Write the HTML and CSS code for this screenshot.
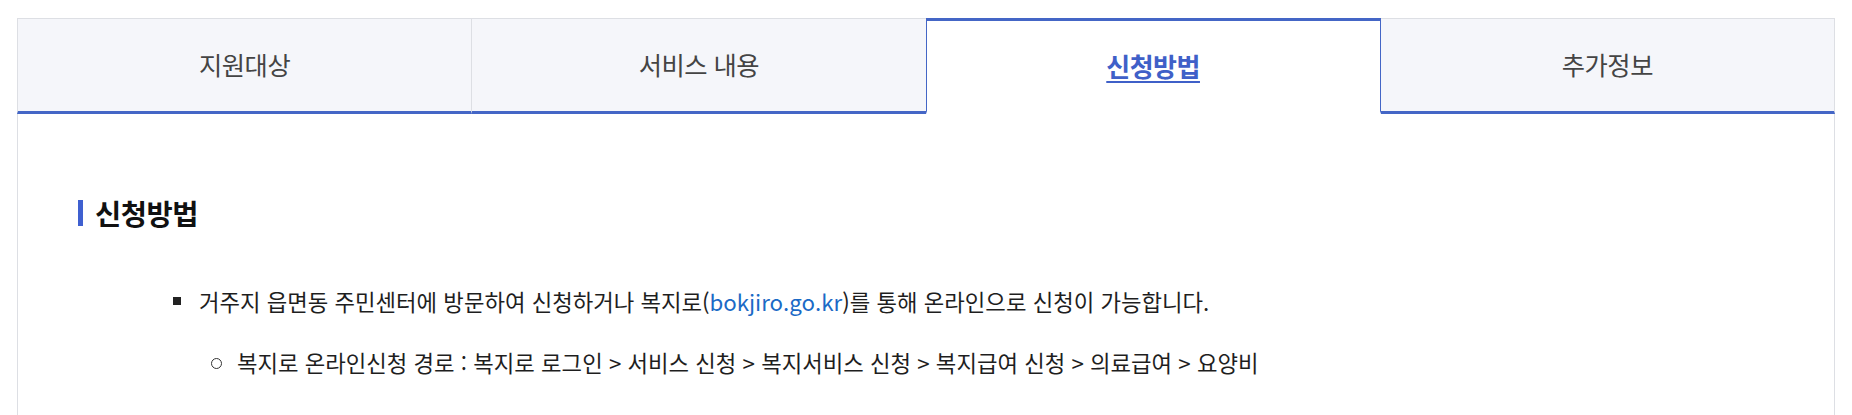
FILE: index.html
```html
<!DOCTYPE html>
<html lang="ko">
<head>
    <meta charset="UTF-8">
    <meta name="viewport" content="width=device-width, initial-scale=1.0">
    <title>신청방법</title>
    <link rel="stylesheet" href="styles.css">
</head>
<body>
    <div class="wrap">
        <!-- Tabs -->
        <ul class="tabs">
            <li class="tab">지원대상</li>
            <li class="tab">서비스 내용</li>
            <li class="tab active"><a href="#">신청방법</a></li>
            <li class="tab">추가정보</li>
        </ul>

        <!-- Tab panel -->
        <div class="panel">
            <h3 class="section-title">신청방법</h3>
            <ul class="list">
                <li>거주지 읍면동 주민센터에 방문하여 신청하거나 복지로(<a class="link" href="#">bokjiro.go.kr</a>)를 통해 온라인으로 신청이 가능합니다.
                    <ul class="sub-list">
                        <li>복지로 온라인신청 경로 : 복지로 로그인 &gt; 서비스 신청 &gt; 복지서비스 신청 &gt; 복지급여 신청 &gt; 의료급여 &gt; 요양비</li>
                    </ul>
                </li>
            </ul>
        </div>
    </div>
</body>
</html>
```

FILE: styles.css
```css
* {
    margin: 0;
    padding: 0;
    box-sizing: border-box;
    font-family: "Noto Sans CJK KR", "Noto Sans", sans-serif;
}

body {
    background-color: #fff;
    padding: 18px 17px 0;
    color: #222;
}

ul {
    list-style: none;
}

.tabs {
    display: flex;
}

.tab {
    flex: 1;
    height: 96px;
    display: flex;
    justify-content: center;
    align-items: center;
    padding-bottom: 2px;
    background-color: #f5f6fa;
    border-top: 1px solid #dddfe4;
    border-right: 1px solid #dddfe4;
    border-bottom: 3px solid #4466c6;
    font-size: 25.3px;
    letter-spacing: -0.5px;
    color: #444;
}

.tab:first-child {
    border-left: 1px solid #dddfe4;
}

.tab.active {
    background-color: #fff;
    border: 1px solid #4466c6;
    border-top-width: 3px;
    border-bottom: 3px solid #fff;
    margin-left: -1px;
}

.tab.active a {
    color: #3f60c8;
    font-size: 26px;
    font-weight: bold;
    text-underline-offset: 4px;
}

.panel {
    border-left: 1px solid #dddfe4;
    border-right: 1px solid #dddfe4;
    padding: 82px 60px 60px;
}

.section-title {
    display: flex;
    align-items: center;
    gap: 12px;
    font-size: 28.5px;
    line-height: 34px;
    font-weight: bold;
    letter-spacing: -0.5px;
    color: #111;
}

.section-title::before {
    content: "";
    width: 5px;
    height: 26px;
    background-color: #3f60d0;
}

.list {
    margin-top: 56px;
    padding-left: 95px;
    font-size: 22.3px;
    line-height: 30px;
    color: #1e1e1e;
}

.list > li {
    position: relative;
    padding-left: 26px;
}

.list > li::before {
    content: "";
    position: absolute;
    left: 0;
    top: 11px;
    width: 8px;
    height: 8px;
    background-color: #222;
}

.link {
    color: #1b6ac6;
    text-decoration: none;
}

.sub-list {
    margin-top: 31px;
    padding-left: 12px;
}

.sub-list li {
    position: relative;
    padding-left: 26px;
}

.sub-list li::before {
    content: "";
    position: absolute;
    left: 0;
    top: 11px;
    width: 9px;
    height: 9px;
    border: 1px solid #333;
    border-radius: 50%;
}
```
